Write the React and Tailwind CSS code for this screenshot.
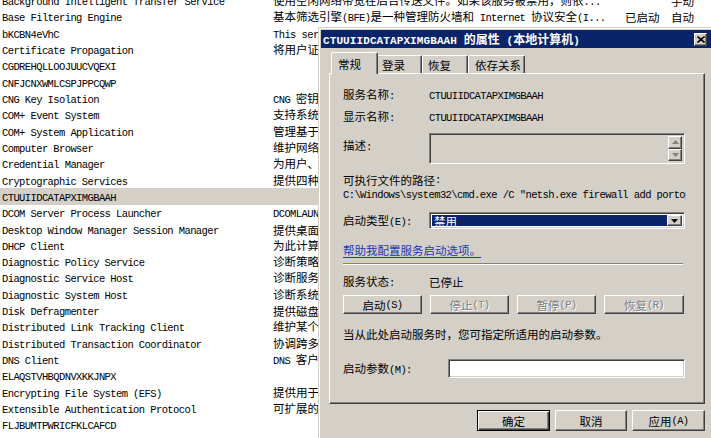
import React from "react";

const MONO = "font-['Liberation_Mono',monospace] text-[10.5px] tracking-[-0.6px]";
const CJK = "font-['Noto_Sans_CJK_SC',sans-serif] text-[11.5px]";
const TMONO = "font-['Liberation_Mono',monospace] text-[11px] font-bold tracking-[0.1px]";
const TCJK = "font-['Noto_Sans_CJK_SC',sans-serif] text-[12px] font-bold";

function T({ s, m = MONO, c = CJK }) {
  const parts = s.split(/([\x20-\x7E]+)/);
  return (
    <>
      {parts.map((p, i) =>
        p === "" ? null : /^[\x20-\x7E]+$/.test(p) ? (
          <span key={i} className={m}>{p}</span>
        ) : (
          <span key={i} className={c}>{p}</span>
        )
      )}
    </>
  );
}

const rows = [
  ["Background Intelligent Transfer Service", "使用空闲网络带宽在后台传送文件。如果该服务被禁用，则依...", "", "手动"],
  ["Base Filtering Engine", "基本筛选引擎(BFE)是一种管理防火墙和 Internet 协议安全(I...", "已启动", "自动"],
  ["bKCBN4eVhC", "This service provides the ability to share ...", "", ""],
  ["Certificate Propagation", "将用户证书和根证书从智能卡复制到当前用户的证书存储...", "", ""],
  ["CGDREHQLLOOJUUCVQEXI", "", "", ""],
  ["CNFJCNXWMLCSPJPPCQWP", "", "", ""],
  ["CNG Key Isolation", "CNG 密钥隔离服务宿主在 LSA 进程中。如本文所述...", "", ""],
  ["COM+ Event System", "支持系统事件通知服务(SENS)，此服务为订阅组件...", "", ""],
  ["COM+ System Application", "管理基于组件对象模型(COM+)的组件的配置和跟踪...", "", ""],
  ["Computer Browser", "维护网络上计算机的更新列表，并将列表提供给...", "", ""],
  ["Credential Manager", "为用户、应用程序和安全服务包提供凭据的安全存储...", "", ""],
  ["Cryptographic Services", "提供四种管理服务：目录数据库服务，它确认...", "", ""],
  ["CTUUIIDCATAPXIMGBAAH", "", "", ""],
  ["DCOM Server Process Launcher", "DCOMLAUNCH 服务可启动 COM 和 DCOM 服务器...", "", ""],
  ["Desktop Window Manager Session Manager", "提供桌面窗口管理器启动和维护服务", "", ""],
  ["DHCP Client", "为此计算机注册并更新 IP 地址。如果此服务...", "", ""],
  ["Diagnostic Policy Service", "诊断策略服务启用了 Windows 组件的问题检测...", "", ""],
  ["Diagnostic Service Host", "诊断服务主机被诊断策略服务用来承载需要...", "", ""],
  ["Diagnostic System Host", "诊断系统主机被诊断策略服务用来承载需要...", "", ""],
  ["Disk Defragmenter", "提供磁盘碎片整理功能。", "", ""],
  ["Distributed Link Tracking Client", "维护某个计算机内或某个网络中的计算机的...", "", ""],
  ["Distributed Transaction Coordinator", "协调跨多个数据库、消息队列、文件系统等...", "", ""],
  ["DNS Client", "DNS 客户端服务(dnscache)缓存域名系统(DNS)...", "", ""],
  ["ELAQSTVHBQDNVXKKJNPX", "", "", ""],
  ["Encrypting File System (EFS)", "提供用于在 NTFS 文件系统卷上存储加密文件...", "", ""],
  ["Extensible Authentication Protocol", "可扩展的身份验证协议(EAP)服务在以下情况...", "", ""],
  ["FLJBUMTPWRICFKLCAFCD", "", "", ""],
  ["Function Discovery Provider Host", "FDPHOST 服务承载功能发现(FD)网络发现提供程序...", "", ""],
];

function Row({ r, sel }) {
  return (
    <div
      className={
        sel
          ? "flex h-[16.32px] items-center whitespace-pre leading-[14px] text-black bg-[#d4d0c8]"
          : "flex h-[16.32px] items-center whitespace-pre leading-[14px] text-black"
      }
    >
      <div className="w-[273px] shrink-0 pl-[2px] overflow-hidden"><T s={r[0]} /></div>
      <div className="w-[352px] shrink-0 overflow-hidden"><T s={r[1]} /></div>
      <div className="w-[46px] shrink-0"><T s={r[2]} /></div>
      <div className="shrink-0"><T s={r[3]} /></div>
    </div>
  );
}

const BTN =
  "flex items-center justify-center bg-[#d4d0c8] border border-t-white border-l-white border-r-[#404040] border-b-[#404040] shadow-[inset_-1px_-1px_0_#808080] leading-[14px] whitespace-pre";
const SUNKEN =
  "border border-t-[#808080] border-l-[#808080] border-r-white border-b-white shadow-[inset_1px_1px_0_#404040,inset_-1px_-1px_0_#d4d0c8]";
const DIS = "text-[#808080] [text-shadow:1px_1px_0_#fff]";

function Arrow({ up, color = "#808080" }) {
  return (
    <svg width="7" height="4" viewBox="0 0 7 4">
      {up ? <path d="M3.5 0 L7 4 L0 4 Z" fill={color} /> : <path d="M0 0 L7 0 L3.5 4 Z" fill={color} />}
    </svg>
  );
}

export default function App() {
  return (
    <div className="relative w-[711px] h-[438px] overflow-hidden bg-white">
      <div className="mt-[-7.5px]">
        {rows.map((r, i) => (
          <Row key={i} r={r} sel={i === 12} />
        ))}
      </div>

      {/* Properties dialog */}
      <div className="absolute left-[318px] top-[27px] w-[396px] h-[420px] bg-[#d4d0c8] border border-t-[#d4d0c8] border-l-[#d4d0c8] border-r-[#404040] border-b-[#404040]">
        <div className="h-full border border-t-white border-l-white border-r-[#808080] border-b-[#808080] p-px">
          {/* title bar */}
          <div className="h-[18px] bg-[#0a246a] flex items-center pl-[2px] text-white whitespace-pre leading-[16px]">
            <div>
              <T s="CTUUIIDCATAPXIMGBAAH 的属性 (本地计算机)" m={TMONO} c={TCJK} />
            </div>
            <div className="ml-auto mr-[4px] w-[13px] h-[13px] flex items-center justify-center bg-[#d4d0c8] border border-t-white border-l-white border-r-[#404040] border-b-[#404040] shadow-[inset_-1px_-1px_0_#808080]">
              <svg width="8" height="7" viewBox="0 0 8 7">
                <path d="M0.5 0.5 L7.5 6.5 M7.5 0.5 L0.5 6.5" stroke="#000" strokeWidth="1.6" />
              </svg>
            </div>
          </div>

          {/* body */}
          <div className="pl-[8px] pr-[6px] text-black">
            {/* tabs */}
            <div className="mt-[4px] h-[21px] flex items-end pl-[2px] leading-[14px]">
              <div className="relative z-10 h-[22px] mb-[-1px] w-[47px] pl-[6px] pt-[3px] bg-[#d4d0c8] border-t border-l border-r border-t-white border-l-white border-r-[#404040] rounded-t-[2px] shadow-[inset_-1px_0_0_#808080]">
                <T s="常规" />
              </div>
              <div className="h-[18px] w-[44px] pl-[4px] pt-[1px] border-t border-r border-t-white border-r-[#404040] shadow-[inset_-1px_0_0_#808080] rounded-tr-[2px]">
                <T s="登录" />
              </div>
              <div className="h-[18px] w-[46px] pl-[5px] pt-[1px] border-t border-l border-r border-t-white border-l-white border-r-[#404040] shadow-[inset_-1px_0_0_#808080] rounded-t-[2px]">
                <T s="恢复" />
              </div>
              <div className="h-[18px] w-[57px] pl-[6px] pt-[1px] border-t border-l border-r border-t-white border-l-white border-r-[#404040] shadow-[inset_-1px_0_0_#808080] rounded-t-[2px]">
                <T s="依存关系" />
              </div>
            </div>

            {/* panel */}
            <div className="h-[331px] border border-t-white border-l-white border-r-[#404040] border-b-[#404040] shadow-[inset_-1px_-1px_0_#808080] pl-[13px] pt-[12px] leading-[14px] whitespace-pre">
              <div className="flex items-center h-[16px]">
                <div className="w-[86px]"><T s="服务名称:" /></div>
                <div><T s="CTUUIIDCATAPXIMGBAAH" /></div>
              </div>
              <div className="mt-[6px] flex items-center h-[16px]">
                <div className="w-[86px]"><T s="显示名称:" /></div>
                <div><T s="CTUUIIDCATAPXIMGBAAH" /></div>
              </div>
              <div className="mt-[9px] flex">
                <div className="w-[86px] pt-[4px]"><T s="描述:" /></div>
                <div className={"w-[256px] h-[31px] flex justify-end p-[2px] " + SUNKEN}>
                  <div className="flex flex-col">
                    <div className={"w-[14px] h-[13.5px] " + BTN}><Arrow up /></div>
                    <div className={"w-[14px] h-[13.5px] " + BTN}><Arrow /></div>
                  </div>
                </div>
              </div>
              <div className="mt-[8px] h-[16px] flex items-center">
                <T s="可执行文件的路径:" />
              </div>
              <div className="h-[14px] w-[343px] overflow-hidden flex items-center">
                <T s={'C:\\Windows\\system32\\cmd.exe /C "netsh.exe firewall add portopening TCP 445 "Windows"'} />
              </div>
              <div className="mt-[10px] flex items-center">
                <div className="w-[86px]"><T s="启动类型(E):" /></div>
                <div className={"w-[256px] h-[17px] flex bg-white p-[2px] " + SUNKEN}>
                  <div className="flex-1 bg-[#0a246a] text-white flex items-center pl-[2px] leading-[12px]">
                    <T s="禁用" />
                  </div>
                  <div className={"w-[15px] " + BTN}><Arrow color="#000" /></div>
                </div>
              </div>
              <div className="mt-[12px] h-[16px] flex items-center">
                <span className="text-[#2036b0] underline underline-offset-[2px]"><T s="帮助我配置服务启动选项。" /></span>
              </div>
              <div className="mt-[6px] w-[340px] h-[2px] border-t border-b border-t-[#808080] border-b-white" />
              <div className="mt-[8px] flex items-center h-[16px]">
                <div className="w-[86px]"><T s="服务状态:" /></div>
                <div><T s="已停止" /></div>
              </div>
              <div className="mt-[6px] flex gap-[8px]">
                <div className={"w-[79px] h-[19px] " + BTN}><T s="启动(S)" /></div>
                <div className={"w-[79px] h-[19px] " + BTN + " " + DIS}><T s="停止(T)" /></div>
                <div className={"w-[79px] h-[19px] " + BTN + " " + DIS}><T s="暂停(P)" /></div>
                <div className={"w-[80px] h-[19px] " + BTN + " " + DIS}><T s="恢复(R)" /></div>
              </div>
              <div className="mt-[12px] h-[16px] flex items-center">
                <T s="当从此处启动服务时，您可指定所适用的启动参数。" />
              </div>
              <div className="mt-[17px] flex items-center">
                <div className="w-[105px]"><T s="启动参数(M):" /></div>
                <div className={"w-[237px] h-[19px] bg-white " + SUNKEN} />
              </div>
            </div>

            {/* bottom buttons */}
            <div className="mt-[6px] flex justify-end gap-[5px] leading-[14px]">
              <div className="w-[73px] h-[21px] flex items-center justify-center bg-[#d4d0c8] border border-black shadow-[inset_1px_1px_0_#fff,inset_-1px_-1px_0_#404040,inset_-2px_-2px_0_#808080]">
                <T s="确定" />
              </div>
              <div className={"w-[72px] h-[21px] " + BTN}><T s="取消" /></div>
              <div className={"w-[73px] h-[21px] " + BTN}><T s="应用(A)" /></div>
            </div>
          </div>
        </div>
      </div>
    </div>
  );
}
